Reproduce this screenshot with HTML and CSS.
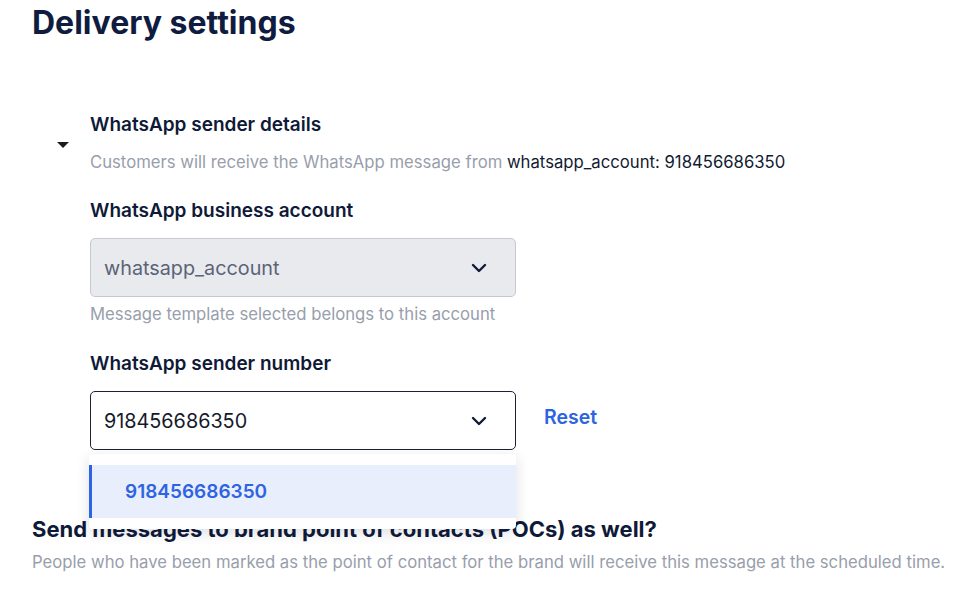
FILE: index.html
```html
<!DOCTYPE html>
<html>
<head>
<meta charset="utf-8">
<link rel="stylesheet" href="styles.css">
</head>
<body>
<div class="page">
  <h1 class="title">Delivery settings</h1>

  <section class="sender">
    <div class="sender-head">
      <span class="caret"></span>
      <div class="sender-head-text">
        <div class="label">WhatsApp sender details</div>
        <div class="desc">Customers will receive the WhatsApp message from <span class="strong">whatsapp_account: 918456686350</span></div>
      </div>
    </div>

    <div class="sender-body">
      <div class="field">
        <div class="label">WhatsApp business account</div>
        <div class="select select-disabled">
          <span>whatsapp_account</span>
          <svg class="chev" width="16" height="10" viewBox="0 0 16 10"><path d="M2 2 L8 8 L14 2" fill="none" stroke="currentColor" stroke-width="2.4" stroke-linecap="round" stroke-linejoin="round"/></svg>
        </div>
        <div class="help">Message template selected belongs to this account</div>
      </div>

      <div class="field field-number">
        <div class="label">WhatsApp sender number</div>
        <div class="select-row">
          <div class="select-wrap">
            <div class="select select-active">
              <span>918456686350</span>
              <svg class="chev" width="16" height="10" viewBox="0 0 16 10"><path d="M2 2 L8 8 L14 2" fill="none" stroke="currentColor" stroke-width="2.4" stroke-linecap="round" stroke-linejoin="round"/></svg>
            </div>
            <div class="menu">
              <div class="option selected">918456686350</div>
            </div>
          </div>
          <a class="reset">Reset</a>
        </div>
      </div>
    </div>
  </section>

  <section class="poc">
    <div class="poc-title">Send messages to brand point of contacts (POCs) as well?</div>
    <div class="desc">People who have been marked as the point of contact for the brand will receive this message at the scheduled time.</div>
  </section>
</div>
</body>
</html>
```

FILE: styles.css
```css
* { box-sizing: border-box; }
html, body { margin: 0; padding: 0; background: #ffffff; }
body {
  font-family: Inter, Roboto, "Noto Sans", Arial, sans-serif;
  color: #0f1a3a;
}
.page {
  padding-left: 32px;
  width: 978px;
}
.title {
  margin: 3px 0 0 0;
  font-size: 32px;
  line-height: 40px;
  font-weight: 700;
  color: #0f1c40;
}
.sender {
  margin-top: 70px;
}
.sender-head {
  display: flex;
  align-items: center;
}
.caret {
  width: 0;
  height: 0;
  margin-left: 25px;
  margin-right: 21px;
  margin-top: 2px;
  border-left: 6px solid transparent;
  border-right: 6px solid transparent;
  border-top: 6px solid #1c1c1c;
}
.label {
  font-size: 19px;
  line-height: 24px;
  font-weight: 600;
  color: #0f1a38;
}
.desc {
  font-size: 16.7px;
  line-height: 24px;
  color: #989eab;
}
.sender-head-text .desc {
  margin-top: 13px;
}
.strong { color: #111a33; }
.sender-body {
  padding-left: 58px;
}
.field { margin-top: 25px; }
.field-number { margin-top: 26px; }
.select {
  margin-top: 15px;
  width: 426px;
  height: 59px;
  border-radius: 5px;
  display: flex;
  align-items: center;
  justify-content: space-between;
  padding: 0 28px 0 13px;
  font-size: 19.8px;
}
.select-disabled {
  background: #e9eaee;
  border: 1px solid #c6c9d0;
  color: #5b6377;
}
.select-active {
  background: #ffffff;
  border: 1px solid #1d2233;
  color: #141a2b;
}
.chev { color: #121a38; }
.help {
  margin-top: 5px;
  font-size: 16.7px;
  line-height: 24px;
  color: #989eab;
}
.select-row {
  display: flex;
  align-items: flex-start;
}
.select-row .select { margin-top: 0; }
.select-wrap {
  position: relative;
  margin-top: 15px;
}
.reset {
  margin-top: 29px;
  margin-left: 28px;
  font-size: 19.5px;
  line-height: 24px;
  font-weight: 600;
  color: #2d64e0;
}
.menu {
  position: absolute;
  left: -1px;
  top: 63px;
  width: 427px;
  background: #ffffff;
  border-radius: 4px;
  padding: 11px 0 11px 0;
  box-shadow: 0 4px 14px rgba(20, 30, 60, 0.14);
  z-index: 5;
}
.option {
  height: 53px;
  display: flex;
  align-items: center;
  padding-left: 33px;
  font-size: 19px;
  font-weight: 600;
}
.option.selected {
  background: #e8eefb;
  border-left: 3px solid #2e63e2;
  color: #2e63e2;
}
.poc {
  margin-top: 65px;
}
.poc-title {
  font-size: 22px;
  line-height: 28px;
  font-weight: 700;
  color: #0f1a38;
}
.poc .desc {
  margin-top: 7px;
}
```
